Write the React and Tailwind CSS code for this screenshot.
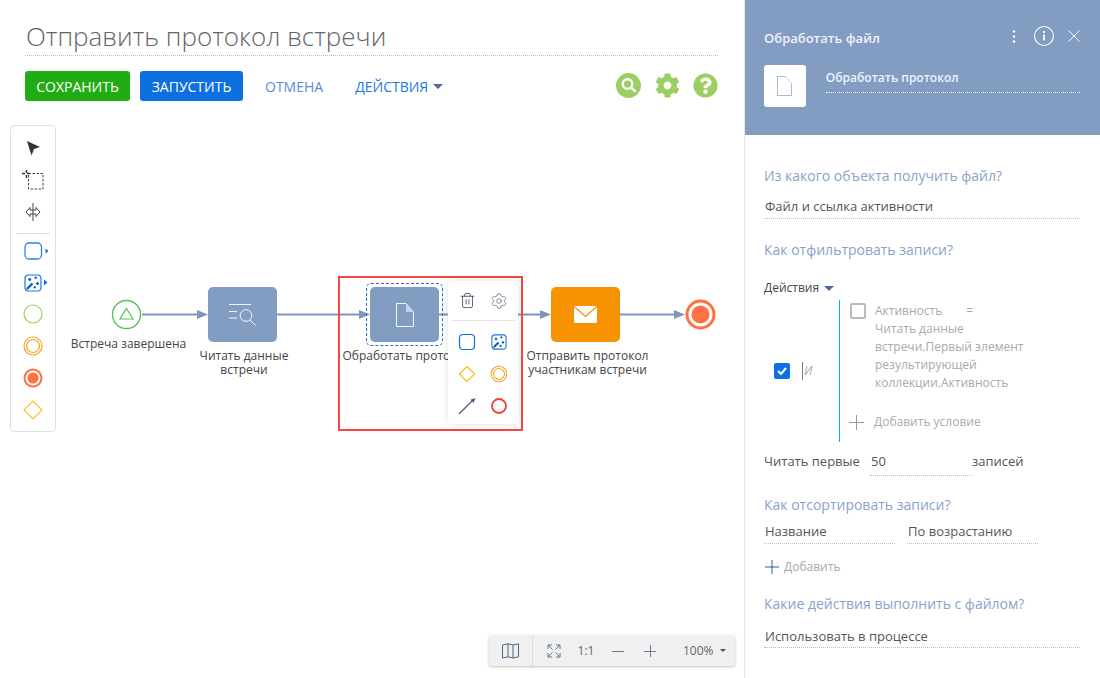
import { FaCog, FaQuestionCircle } from 'react-icons/fa'
import { Settings, Trash2 } from 'lucide-react'

const LINE = '#7f96bb'

function Caret({ className = '' }) {
  return <span className={`inline-block w-0 h-0 border-x-[5px] border-x-transparent border-t-[5px] border-t-[#4a6a9c] ${className}`} />
}

function Wand({ size = 18 }) {
  return (
    <svg width={size} height={size} viewBox="0 0 18 18" fill="none">
      <rect x="1" y="1" width="16" height="16" rx="3.5" stroke="#1a78e6" strokeWidth="1.2" />
      <path d="M3 15 8.500 9.500" stroke="#0d5fc8" strokeWidth="2.4" />
      <path d="M4.200 5.500h3M5.700 4v3M10.500 3.800h2.400M11.700 2.600v2.400M12 9.500h3M13.500 8v3M9.500 13.300h2.400M10.700 12.100v2.400" stroke="#0d5fc8" strokeWidth="1.300" />
    </svg>
  )
}

function Doc({ stroke = '#fff', fold = '#c7d3e6', w = 18, h = 24 }) {
  return (
    <svg width={w} height={h} viewBox="0 0 18 24" fill="none">
      <path d="M.5.5H10L17.500 9v14.500H.5z" stroke={stroke} strokeWidth=".9" />
      <path d="M10 .5V9h7.500z" fill={fold} />
    </svg>
  )
}

function ToolItem({ children, className = 'h-[32px]' }) {
  return <div className={`flex items-center justify-center ${className}`}>{children}</div>
}

function Toolbar() {
  return (
    <div className="absolute left-[10px] top-[5px] w-[46px] h-[307px] pt-[6px] bg-white border border-[#e0e0e0] rounded-[4px] flex flex-col">
      <ToolItem>
        <svg width="16" height="16" viewBox="0 0 16 16"><path d="M2 1 15 7 9 9 6.500 15.500z" fill="#333" /></svg>
      </ToolItem>
      <ToolItem>
        <svg width="22" height="20" viewBox="0 0 22 20" fill="none">
          <path d="M6.500 3.500h14.500v15.500H6.500z" stroke="#444" strokeDasharray="2.500 1.500" />
          <path d="M0 3.500h9M4.500 0v8" stroke="#333" strokeWidth="1.500" strokeDasharray="3 2" />
        </svg>
      </ToolItem>
      <ToolItem>
        <svg width="16" height="18" viewBox="0 0 16 18" fill="none" stroke="#444" strokeWidth="1">
          <path d="M8 0v18" />
          <path d="M6 7H5V4.500L1 9l4 4.500V11h6v2.500L15 9l-4-4.500V7z" />
        </svg>
      </ToolItem>
      <div className="mt-[5px] mx-[5px] border-t border-[#e0e0e0]" />
      <div className="mt-[1px]">
        <ToolItem>
          <svg width="34" height="20" viewBox="0 0 34 20" fill="none">
            <rect x="9" y="2" width="16.500" height="16" rx="4" stroke="#2a85ee" strokeWidth="1.300" />
            <path d="M29.500 7.500 32.500 10l-3 2.500z" fill="#0d6fe0" />
          </svg>
        </ToolItem>
        <ToolItem className="h-[31px]">
          <div className="relative flex items-center">
            <Wand />
            <svg className="absolute left-[20px] top-[5px]" width="4" height="7" viewBox="0 0 4 7"><path d="M0 .5 3.500 3.500 0 6.500z" fill="#0d6fe0" /></svg>
          </div>
        </ToolItem>
        <ToolItem>
          <svg width="20" height="20" viewBox="0 0 20 20" fill="none"><circle cx="10" cy="10" r="9" stroke="#9ccf63" strokeWidth="1.200" /></svg>
        </ToolItem>
        <ToolItem>
          <svg width="20" height="20" viewBox="0 0 20 20" fill="none">
            <circle cx="10" cy="10" r="9" stroke="#f5a623" strokeWidth="1.200" />
            <circle cx="10" cy="10" r="6.500" stroke="#f5a623" strokeWidth="1.200" />
          </svg>
        </ToolItem>
        <ToolItem>
          <svg width="20" height="20" viewBox="0 0 20 20" fill="none">
            <circle cx="10" cy="10" r="8.500" stroke="#ff7043" strokeWidth="2" />
            <circle cx="10" cy="10" r="5.500" fill="#ff7043" />
          </svg>
        </ToolItem>
        <ToolItem>
          <svg width="20" height="20" viewBox="0 0 20 20" fill="none"><path d="M10 1 19 10 10 19 1 10z" stroke="#fdc02f" strokeWidth="1.200" /></svg>
        </ToolItem>
      </div>
    </div>
  )
}

function Connectors() {
  const heads = [208, 370, 551, 685]
  return (
    <svg className="absolute left-0 top-0" width="745" height="558" viewBox="0 0 745 558" fill="none">
      <path d="M142 194.500H200M277 194.500H362M439 194.500H543M620 194.500H677" stroke={LINE} strokeWidth="2" />
      {heads.map(x => (
        <path key={x} d={`M${x} 194.500 L${x - 11} 190 V199 z`} fill={LINE} />
      ))}
      <circle cx="126.500" cy="194.500" r="14" stroke="#5cc05c" strokeWidth="1.400" />
      <path d="M126.500 188.500 133 199H120z" stroke="#5cc05c" strokeWidth="1.200" />
      <circle cx="700.500" cy="194.500" r="13.500" fill="#fff" stroke="#ff7043" strokeWidth="3" />
      <circle cx="700.500" cy="194.500" r="9" fill="#ff7043" />
    </svg>
  )
}

function NodeLabel({ children, className = '' }) {
  return <div className={`absolute text-[12px] leading-[14px] text-[#444] text-center ${className}`}>{children}</div>
}

function ElementMenu() {
  return (
    <div className="absolute left-[448px] top-[161px] w-[70px] h-[143px] px-[3px] bg-white rounded-[4px] shadow-[0_0_8px_rgba(0,0,0,0.12)] flex flex-col">
      <div className="h-[40px] border-b border-[#e4e4e4] grid grid-cols-2 items-center justify-items-center">
        <Trash2 size={17} strokeWidth={1.300} className="text-[#4a5568]" />
        <Settings size={18} strokeWidth={1} className="text-[#5a6a80]" />
      </div>
      <div className="mt-[5px] grid grid-cols-2 auto-rows-[32px] items-center justify-items-center">
        <svg width="18" height="18" viewBox="0 0 18 18" fill="none"><rect x="1.500" y="1.500" width="15" height="15" rx="3.500" stroke="#0d6fe0" strokeWidth="1.200" /></svg>
        <Wand size={16} />
        <svg width="18" height="18" viewBox="0 0 18 18" fill="none"><path d="M9 1.500 16.500 9 9 16.500 1.500 9z" stroke="#fdc02f" strokeWidth="1.300" /></svg>
        <svg width="18" height="18" viewBox="0 0 18 18" fill="none">
          <circle cx="9" cy="9" r="7.800" stroke="#f5a623" strokeWidth="1.100" />
          <circle cx="9" cy="9" r="5.500" stroke="#f5a623" strokeWidth="1.100" />
        </svg>
        <svg width="18" height="18" viewBox="0 0 18 18" fill="none">
          <path d="M1 17 15 3" stroke="#4a5a78" strokeWidth="1.300" />
          <path d="M17.500 1 12.500 2.800 15.500 6z" fill="#4a5a78" />
        </svg>
        <svg width="18" height="18" viewBox="0 0 18 18" fill="none"><circle cx="9" cy="9" r="7" stroke="#f23a3a" strokeWidth="1.800" /></svg>
      </div>
    </div>
  )
}

function ZoomBar() {
  return (
    <div className="absolute left-[489px] top-[515px] w-[246px] h-[31px] bg-[#f0f0f0] rounded-[3px] shadow-[0_1px_3px_rgba(0,0,0,0.25)] flex items-center text-[12px] text-[#666]">
      <div className="w-[44px] h-full border-r border-[#dcdcdc] flex items-center justify-center">
        <svg width="17" height="16" viewBox="0 0 17 16" fill="none" stroke="#4f6484" strokeWidth="1">
          <path d="M.5 2 6 .8l5 1.200L16.500.8v13L11 15l-5-1.200L.5 15zM6 .8v13M11 2v13" />
        </svg>
      </div>
      <div className="w-[41px] flex justify-center">
        <svg width="14" height="14" viewBox="0 0 14 14" fill="none" stroke="#5d7190" strokeWidth="1">
          <path d="M1 5V1h4M9 1h4v4M13 9v4H9M5 13H1V9M1.500 1.500l4 4M12.500 1.500l-4 4M12.500 12.500l-4-4M1.500 12.500l4-4" />
        </svg>
      </div>
      <span className="w-[24px] text-center">1:1</span>
      <div className="w-[40px] flex justify-center">
        <svg width="12" height="12" viewBox="0 0 12 12" stroke="#6a7d98"><path d="M0 6.500h12" /></svg>
      </div>
      <div className="w-[24px] flex justify-center">
        <svg width="12" height="12" viewBox="0 0 12 12" stroke="#6a7d98"><path d="M0 6.500h12M6.500 0v12" /></svg>
      </div>
      <span className="ml-[21px] w-[31px]">100%</span>
      <span className="ml-[6px] w-0 h-0 border-x-[3px] border-x-transparent border-t-[3px] border-t-[#555]" />
    </div>
  )
}

function Canvas() {
  return (
    <div className="relative flex-1">
      <Toolbar />
      <Connectors />

      <NodeLabel className="left-[66px] top-[217px] w-[125px]">Встреча завершена</NodeLabel>

      <div className="absolute left-[208px] top-[167px] w-[69px] h-[55px] bg-[#839cc2] rounded-[5px] flex items-center justify-center">
        <svg width="30" height="24" viewBox="0 0 30 24" fill="none" stroke="#fff">
          <path d="M1 1.500h22M1 8.500h8M1 15h8" strokeWidth=".9" />
          <circle cx="18" cy="12.500" r="5.800" strokeWidth=".9" />
          <path d="m22 17 5.500 5.500" strokeWidth=".9" />
        </svg>
      </div>
      <NodeLabel className="left-[194px] top-[229px] w-[100px]">Читать данные<br />встречи</NodeLabel>

      <div className="absolute left-[366px] top-[163px] w-[77px] h-[63px] border border-dashed border-[#2a6fd0] rounded-[5px] p-[3px]">
        <div className="w-full h-full bg-[#839cc2] rounded-[5px] flex items-center justify-center">
          <Doc />
        </div>
      </div>
      <NodeLabel className="left-[336px] top-[229px] w-[141px]">Обработать протокол</NodeLabel>

      <div className="absolute left-[551px] top-[167px] w-[69px] h-[55px] bg-[#f79200] rounded-[5px] flex items-center justify-center">
        <svg width="23" height="17" viewBox="0 0 23 17">
          <rect width="23" height="17" rx="1.500" fill="#fff" />
          <path d="M0 0.500 11.500 10.500 23 0.500" fill="none" stroke="#f79200" strokeWidth="1.300" />
        </svg>
      </div>
      <NodeLabel className="left-[517px] top-[229px] w-[141px]">Отправить протокол<br />участникам встречи</NodeLabel>

      <ElementMenu />
      <div className="absolute left-[338px] top-[156px] w-[185px] h-[155px] border-2 border-[#f44545]" />
      <ZoomBar />
    </div>
  )
}

function Heading({ children, className = '' }) {
  return <div className={`text-[14px] leading-[20px] text-[#8aa2cb] ${className}`}>{children}</div>
}

function Field({ children, className = '' }) {
  return <div className={`text-[13px] leading-[18px] text-[#555] border-b border-dotted border-[#bdbdbd] pl-[1px] ${className}`}>{children}</div>
}

function Panel() {
  return (
    <div className="w-[355px] h-full shadow-[-1px_0_0_#e8e8e8] flex flex-col">
      <div className="h-[135px] shrink-0 bg-[#839cc2] pl-[19px] pr-[20px] pt-[29px] text-white">
        <div className="h-[18px] flex items-center justify-between">
          <span className="text-[13px] leading-[18px] font-semibold text-[#eef2f8]">Обработать файл</span>
          <div className="-mt-[4px] flex items-center">
            <svg width="4" height="13" viewBox="0 0 4 13" fill="#fff"><circle cx="2" cy="1.500" r="1.200" /><circle cx="2" cy="6.500" r="1.200" /><circle cx="2" cy="11.500" r="1.200" /></svg>
            <svg className="ml-[17px]" width="22" height="22" viewBox="0 0 22 22" fill="none" stroke="#fff">
              <circle cx="11" cy="11" r="9.500" strokeWidth="1.100" />
              <path d="M11 9.500v6" strokeWidth="1.800" />
              <path d="M11 6v2" strokeWidth="1.800" />
            </svg>
            <svg className="ml-[13px]" width="12" height="12" viewBox="0 0 12 12" stroke="#fff" strokeWidth=".9"><path d="m.5.5 11 11M11.500.5l-11 11" /></svg>
          </div>
        </div>
        <div className="mt-[18px] flex">
          <div className="w-[42px] h-[42px] bg-white rounded-[3px] flex items-center justify-center">
            <Doc stroke="#839cc2" fold="#fff" w={15} h={20} />
          </div>
          <div className="ml-[20px] w-[255px] h-[28px] border-b border-dotted border-white text-[12px] leading-[26px] font-semibold text-[#eef2f8]">
            Обработать протокол
          </div>
        </div>
      </div>

      <div className="pl-[19px] pr-[20px]">
        <Heading className="mt-[31px]">Из какого объекта получить файл?</Heading>
        <Field className="mt-[11px] pb-[3px]">Файл и ссылка активности</Field>
        <Heading className="mt-[21px]">Как отфильтровать записи?</Heading>
        <div className="mt-[20px] text-[12px] leading-[16px] text-[#444] flex items-center">
          Действия<Caret className="ml-[5px]" />
        </div>

        <div className="mt-[4px] flex h-[142px] text-[12px]">
          <div className="w-[75px] flex items-center pl-[10px]">
            <span className="w-[16px] h-[16px] rounded-[2px] bg-[#0d6fe0] flex items-center justify-center">
              <svg width="10" height="8" viewBox="0 0 10 8" fill="none" stroke="#fff" strokeWidth="2"><path d="m1 4 3 3 5-6" /></svg>
            </span>
            <span className="ml-[12px] pl-[1px] border-l border-[#777] italic text-[#aaa] leading-[18px]">И</span>
          </div>
          <div className="border-l border-[#00aeef] pl-[10px] flex-1">
            <div className="pt-[2px] flex">
              <span className="mt-[1px] w-[16px] h-[16px] rounded-[2px] border-2 border-[#bbb]" />
              <div className="ml-[9px] w-[155px] leading-[18px] text-[#aaa]">
                Активность <span className="ml-[21px]">=</span><br />
                Читать данные<br />
                встречи.Первый элемент<br />
                результирующей<br />
                коллекции.Активность
              </div>
            </div>
            <div className="mt-[21px] -ml-[1px] flex items-center text-[#aaa]">
              <svg width="15" height="15" viewBox="0 0 15 15" stroke="#999"><path d="M0 7.500h15M7.500 0v15" /></svg>
              <span className="ml-[10px] leading-[18px]">Добавить условие</span>
            </div>
          </div>
        </div>

        <div className="mt-[10px] h-[24px] flex text-[13px] text-[#555] leading-[18px]">
          <span className="w-[106px]">Читать первые</span>
          <span className="w-[102px] h-[24px] pl-[1px] border-b border-dotted border-[#bdbdbd]">50</span>
          <span>записей</span>
        </div>

        <Heading className="mt-[19px]">Как отсортировать записи?</Heading>
        <div className="mt-[7px] flex gap-[12px]">
          <Field className="w-[131px] pb-[3px]">Название</Field>
          <Field className="w-[131px] pb-[3px]">По возрастанию</Field>
        </div>
        <div className="mt-[14px] flex items-center text-[12px] leading-[18px] text-[#aaa]">
          <svg width="14" height="14" viewBox="0 0 14 14" stroke="#2c5aa8" className="ml-[1px]"><path d="M0 7h14M7 0v14" /></svg>
          <span className="ml-[5px]">Добавить</span>
        </div>
        <Heading className="mt-[18px]">Какие действия выполнить с файлом?</Heading>
        <Field className="mt-[13px] pb-[2px]">Использовать в процессе</Field>
      </div>
    </div>
  )
}

export default function App() {
  return (
    <div className="w-[1100px] h-[678px] bg-white flex overflow-hidden" style={{ fontFamily: '"Open Sans", sans-serif' }}>
      <div className="w-[745px] h-full flex flex-col">
        <div className="h-[120px] shrink-0 pl-[25px] pr-[27px]">
          <div className="h-[56px] pt-[18px] border-b border-dotted border-[#bdbdbd] text-[26px] leading-[36px] font-light text-[#666] pl-[1px]">
            Отправить протокол встречи
          </div>
          <div className="mt-[15px] flex items-center">
            <button className="w-[105px] h-[30px] rounded-[3px] bg-[#22ac14] text-white text-[14px] font-medium">СОХРАНИТЬ</button>
            <button className="ml-[10px] w-[103px] h-[30px] rounded-[3px] bg-[#0d6fe0] text-white text-[14px] font-medium">ЗАПУСТИТЬ</button>
            <span className="ml-[22px] text-[14px] text-[#5b8ade]">ОТМЕНА</span>
            <span className="ml-[32px] text-[14px] text-[#1a78e6]">ДЕЙСТВИЯ</span>
            <Caret className="ml-[5px]" />
            <svg className="ml-auto -mt-[2px]" width="25" height="25" viewBox="0 0 26 26" fill="none">
              <circle cx="13" cy="13" r="13" fill="#9ccf63" />
              <circle cx="12" cy="11.500" r="5" stroke="#fff" strokeWidth="2.400" />
              <path d="m16 15.500 4.500 4" stroke="#fff" strokeWidth="2.400" />
            </svg>
            <FaCog size={25} className="ml-[14px] -mt-[2px] text-[#9ccf63]" />
            <FaQuestionCircle size={25} className="ml-[13px] -mt-[2px] text-[#9ccf63]" />
          </div>
        </div>
        <Canvas />
      </div>
      <Panel />
    </div>
  )
}
